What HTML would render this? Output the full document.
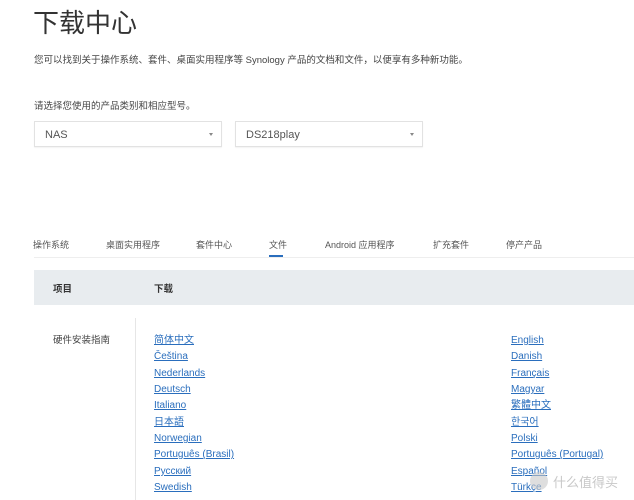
<!DOCTYPE html>
<html><head><meta charset="utf-8"><style>
*{margin:0;padding:0;box-sizing:border-box}
body{width:634px;height:500px;overflow:hidden;background:#fff;font-family:"Liberation Sans","Noto Sans CJK SC",sans-serif;color:#333;position:relative}
.a{position:absolute;white-space:nowrap;line-height:12px}
h1{position:absolute;left:33px;top:5px;font-size:26px;line-height:34px;font-weight:400;color:#333;font-family:"Noto Sans CJK SC",sans-serif}
.sel{position:absolute;top:121px;height:26px;border:1px solid #e2e2e2;font-size:11px;line-height:12px;color:#555;padding:7px 0 0 10px;box-shadow:0 1px 1px rgba(0,0,0,.05)}
.sel:after{content:"";position:absolute;right:8px;top:11px;border-left:2.5px solid transparent;border-right:2.5px solid transparent;border-top:3px solid #888}
.tab{position:absolute;top:239px;font-size:9px;line-height:12px;color:#555}
.l{position:absolute;font-size:10px;line-height:12px;color:#2a6ebd;text-decoration:underline;white-space:nowrap}
</style></head><body>
<h1>下载中心</h1>
<div class="a" style="left:34px;top:55px;font-size:9.5px;color:#444">您可以找到关于操作系统、套件、桌面实用程序等 Synology 产品的文档和文件，以便享有多种新功能。</div>
<div class="a" style="left:34px;top:101px;font-size:9.5px;color:#444">请选择您使用的产品类别和相应型号。</div>
<div class="sel" style="left:34px;width:188px">NAS</div>
<div class="sel" style="left:235px;width:188px">DS218play</div>
<div class="tab" style="left:33px">操作系统</div>
<div class="tab" style="left:106px">桌面实用程序</div>
<div class="tab" style="left:196px">套件中心</div>
<div class="tab" style="left:269px">文件</div>
<div class="tab" style="left:325px">Android 应用程序</div>
<div class="tab" style="left:433px">扩充套件</div>
<div class="tab" style="left:506px">停产产品</div>
<div class="a" style="left:34px;top:257px;width:600px;height:1px;background:#eee"></div>
<div class="a" style="left:269px;top:255px;width:14px;height:2px;background:#2a6ebd"></div>
<div class="a" style="left:34px;top:270px;width:600px;height:35px;background:#e8ecef"></div>
<div class="a" style="left:53px;top:284px;font-size:9.5px;font-weight:bold;color:#333">项目</div>
<div class="a" style="left:154px;top:284px;font-size:9.5px;font-weight:bold;color:#333">下载</div>
<div class="a" style="left:53px;top:335px;font-size:9.5px;color:#444">硬件安装指南</div>
<div class="a" style="left:135px;top:318px;width:1px;height:182px;background:#e6e6e6"></div>
<div class="l" style="left:154px;top:335px">简体中文</div>
<div class="l" style="left:154px;top:351px">Čeština</div>
<div class="l" style="left:154px;top:368px">Nederlands</div>
<div class="l" style="left:154px;top:384px">Deutsch</div>
<div class="l" style="left:154px;top:400px">Italiano</div>
<div class="l" style="left:154px;top:417px">日本語</div>
<div class="l" style="left:154px;top:433px">Norwegian</div>
<div class="l" style="left:154px;top:449px">Português (Brasil)</div>
<div class="l" style="left:154px;top:466px">Русский</div>
<div class="l" style="left:154px;top:482px">Swedish</div>
<div class="l" style="left:511px;top:335px">English</div>
<div class="l" style="left:511px;top:351px">Danish</div>
<div class="l" style="left:511px;top:368px">Français</div>
<div class="l" style="left:511px;top:384px">Magyar</div>
<div class="l" style="left:511px;top:400px">繁體中文</div>
<div class="l" style="left:511px;top:417px">한국어</div>
<div class="l" style="left:511px;top:433px">Polski</div>
<div class="l" style="left:511px;top:449px">Português (Portugal)</div>
<div class="l" style="left:511px;top:466px">Español</div>
<div class="l" style="left:511px;top:482px">Türkçe</div>
<div class="a" style="left:530px;top:472px;width:18px;height:18px;border-radius:50%;background:rgba(200,200,200,.6)"></div>
<div class="a" style="left:553px;top:475px;font-size:13px;line-height:16px;color:rgba(190,190,190,.85)">什么值得买</div>
</body></html>
